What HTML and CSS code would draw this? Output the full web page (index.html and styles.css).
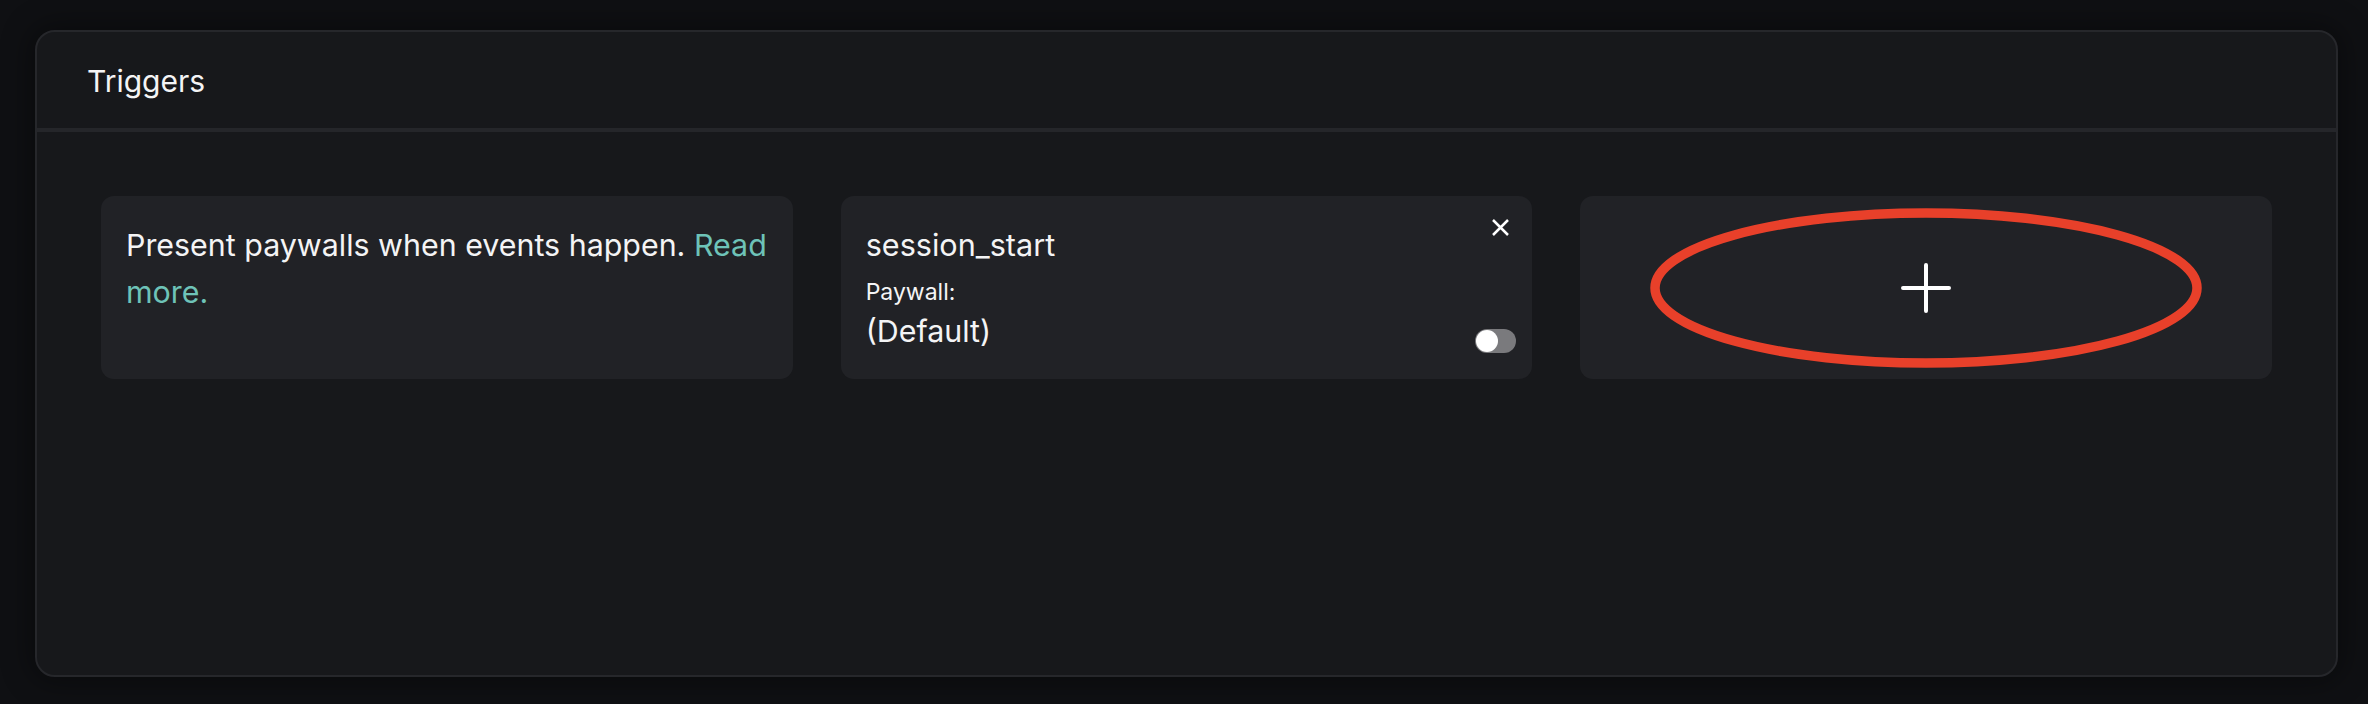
FILE: index.html
```html
<!DOCTYPE html>
<html lang="en">
<head>
<meta charset="utf-8">
<title>Triggers</title>
<link rel="stylesheet" href="styles.css">
</head>
<body>
  <section class="panel">
    <header class="panel-header">
      <h2 class="panel-title">Triggers</h2>
    </header>
    <div class="panel-body">
      <div class="card card-info">
        <p class="info-text">Present paywalls when events happen. <a class="link" href="#">Read more.</a></p>
      </div>
      <div class="card card-trigger">
        <div class="trigger-body">
          <div class="event-name">session_start</div>
          <div class="label">Paywall:</div>
          <div class="value">(Default)</div>
        </div>
        <div class="trigger-side">
          <button class="close-btn" aria-label="Remove">
            <svg width="17" height="17" viewBox="0 0 17 17"><path d="M1 1 L16 16 M16 1 L1 16" stroke="#ffffff" stroke-width="2.5" fill="none"/></svg>
          </button>
          <span class="toggle"><span class="knob"></span></span>
        </div>
      </div>
      <div class="card card-add">
        <svg class="plus" width="50" height="50" viewBox="0 0 50 50"><path d="M25 2 V48 M2 25 H48" stroke="#ffffff" stroke-width="4" stroke-linecap="round" fill="none"/></svg>
        <svg class="annotation" width="566" height="172" viewBox="0 0 566 172"><ellipse cx="283" cy="86" rx="271" ry="75" fill="none" stroke="#e8402a" stroke-width="9.5"/></svg>
      </div>
    </div>
  </section>
</body>
</html>
```

FILE: styles.css
```css
* { box-sizing: border-box; }
html, body { height: 100%; }
body {
  margin: 0;
  background: #0f1013;
  font-family: Inter, "Noto Sans", "Liberation Sans", sans-serif;
  color: #f4f4f5;
  display: flex;
  flex-direction: column;
  padding: 30px 30px 27px 35px;
}
.panel {
  flex: 1;
  background: #17181b;
  border: 2px solid #26272b;
  border-radius: 20px;
  box-shadow: 0 0 28px 6px rgba(0, 0, 0, 0.35);
  display: flex;
  flex-direction: column;
}
.panel-header {
  padding: 29px 50px 27px;
  border-bottom: 4px solid #25262a;
}
.panel-title {
  margin: 0;
  font-size: 30px;
  font-weight: 400;
  line-height: 40px;
}
.panel-body {
  padding: 64px;
  display: grid;
  grid-template-columns: repeat(3, 1fr);
  gap: 48px;
  align-items: start;
}
.card {
  background: #212226;
  border-radius: 13px;
  height: 183px;
}
.card-info {
  padding: 26px 6px 0 25px;
}
.info-text {
  margin: 0;
  font-size: 30.4px;
  line-height: 47px;
}
.link {
  color: #6ec3b8;
  text-decoration: none;
}
.card-trigger {
  display: flex;
}
.trigger-body {
  flex: 1;
  padding: 29px 0 0 25px;
}
.event-name {
  font-size: 30.6px;
  line-height: 40px;
  margin-bottom: 12px;
}
.label {
  font-size: 23px;
  line-height: 30px;
}
.value {
  font-size: 30.4px;
  line-height: 40px;
  margin-top: 4px;
}
.trigger-side {
  display: flex;
  flex-direction: column;
  justify-content: space-between;
  align-items: flex-end;
  padding: 23px 16px 26px 0;
}
.close-btn {
  background: none;
  border: 0;
  padding: 0;
  margin-right: 7px;
  width: 17px;
  height: 17px;
  display: block;
  cursor: pointer;
}
.close-btn svg { display: block; }
.toggle {
  display: block;
  position: relative;
  width: 41px;
  height: 24px;
  border-radius: 12px;
  background: #7a7a7d;
}
.knob {
  position: absolute;
  left: 1px;
  top: 1px;
  width: 22px;
  height: 22px;
  border-radius: 50%;
  background: #ffffff;
}
.card-add {
  position: relative;
  display: flex;
  align-items: center;
  justify-content: center;
}
.plus { display: block; }
.annotation {
  position: absolute;
  left: 50%;
  top: 50%;
  transform: translate(-50%, -50%);
  pointer-events: none;
}
```
